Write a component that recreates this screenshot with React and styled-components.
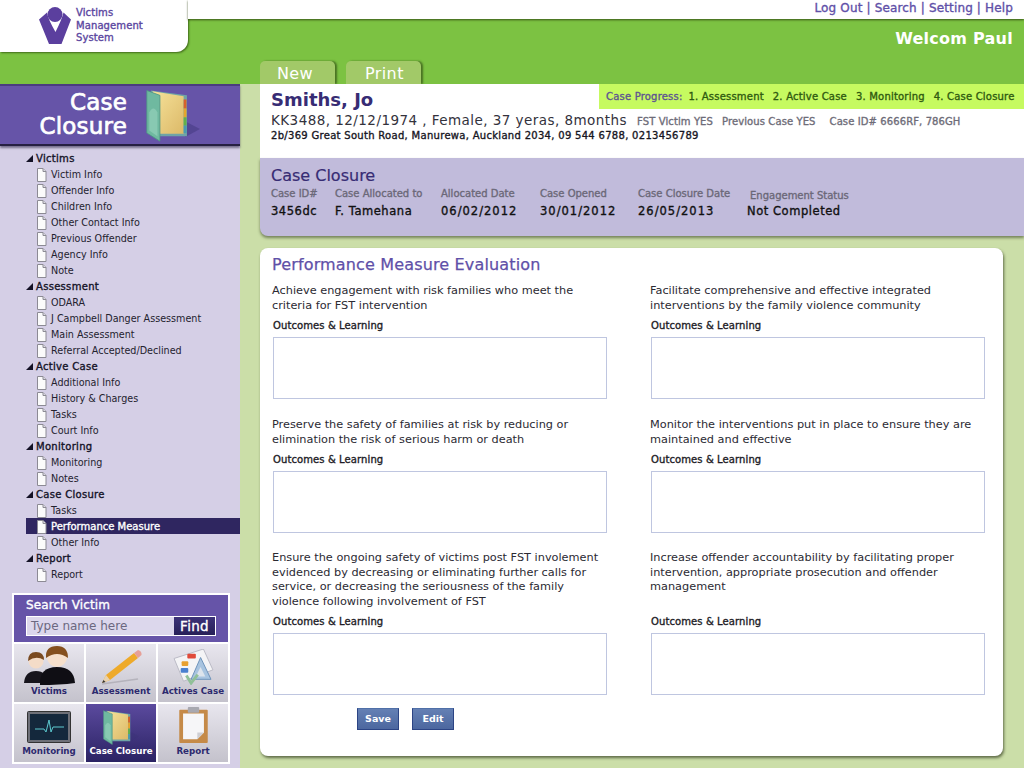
import React from 'react';
import styled, { createGlobalStyle, css } from 'styled-components';

const GlobalStyle = createGlobalStyle`
  html, body { margin: 0; padding: 0; background: #cbdea8; }
  body { font-family: "DejaVu Sans", Verdana, sans-serif; }
  * { box-sizing: border-box; }
`;

// the reference's bold is narrower than DejaVu Bold
const semiBold = css`
  font-weight: normal;
  -webkit-text-stroke: 0.35px currentColor;
`;

const Page = styled.div`
  width: 1024px;
  height: 768px;
  overflow: hidden;
  display: flex;
  flex-direction: column;
  background: #cbdea8;
`;

// HEADER
const Header = styled.header`
  height: 84px;
  flex: none;
  display: flex;
  background: #7cc242;
`;

const LogoCard = styled.div`
  width: 188px;
  height: 52px;
  flex: none;
  display: flex;
  gap: 5px;
  padding: 7px 0 0 39px;
  background: #fff;
  border-bottom-right-radius: 12px;
  box-shadow: 1px 1px 2px rgba(40, 70, 10, 0.7);
  position: relative;
  z-index: 2;
`;

const LogoText = styled.div`
  ${semiBold}
  font-size: 10px;
  line-height: 12.7px;
  letter-spacing: 0.1px;
  color: #5b46a0;
`;

const HeaderRight = styled.div`
  flex: 1;
  display: flex;
  flex-direction: column;
`;

const TopLinks = styled.div`
  ${semiBold}
  height: 19px;
  flex: none;
  position: relative;
  z-index: 3;
  background: #fff;
  box-shadow: 0 1px 2px rgba(40, 60, 10, 0.8);
  text-align: right;
  padding-right: 11px;
  font-size: 12px;
  line-height: 17px;
  letter-spacing: 0.15px;
  color: #5f50a8;
`;

const Welcome = styled.div`
  text-align: right;
  padding: 10px 11px 0 0;
  font-size: 16px;
  font-weight: bold;
  line-height: 20px;
  letter-spacing: 0.25px;
  color: #fff;
`;

const Tabs = styled.div`
  margin-top: auto;
  margin-left: 72px;
  display: flex;
  gap: 11px;
`;

const Tab = styled.div`
  width: 75px;
  height: 23px;
  padding-left: ${(p) => p.$pad}px;
  background: #a2c968;
  border-radius: 5px 5px 0 0;
  box-shadow: 2px 0 2px rgba(50, 80, 20, 0.7);
  color: #fff;
  font-size: 16px;
  line-height: 26px;
  letter-spacing: 0.4px;
`;

const Body = styled.div`
  flex: 1;
  display: flex;
  min-height: 0;
`;

// SIDEBAR
const Sidebar = styled.aside`
  width: 240px;
  flex: none;
  display: flex;
  flex-direction: column;
  background: #d5cfe6;
`;

const Banner = styled.div`
  height: 62px;
  flex: none;
  display: flex;
  justify-content: flex-end;
  padding: 2px 40px 0 0;
  gap: 19px;
  align-items: flex-start;
  background: #6654a8;
  border-top: 2px solid #4a3c80;
  border-bottom: 2px solid #262042;
  box-shadow: 0 2px 2px rgba(40, 35, 70, 0.55);
`;

const BannerTitle = styled.div`
  padding-top: 2px;
  font-size: 23px;
  font-weight: normal;
  -webkit-text-stroke: 0.7px #fff;
  letter-spacing: 0.2px;
  line-height: 24px;
  color: #fff;
  text-align: right;
`;

const Tree = styled.nav`
  padding: 4px 0 0 26px;
  flex: none;
`;

const TreeHead = styled.div`
  ${semiBold}
  height: 16px;
  padding-top: 1px;
  display: flex;
  align-items: center;
  gap: 3px;
  font-size: 10px;
  line-height: 15px;
  letter-spacing: 0.3px;
  color: #141226;
`;

const Triangle = styled.span`
  width: 0;
  height: 0;
  border-style: solid;
  border-width: 0 0 7px 7px;
  border-color: transparent transparent #141226 transparent;
`;

const TreeItem = styled.div`
  ${(p) => (p.$active ? semiBold : '')}
  height: 16px;
  display: flex;
  align-items: center;
  gap: 4px;
  padding: 1px 0 0 10px;
  font-size: ${(p) => (p.$active ? 10 : 9.6)}px;
  line-height: 15px;
  color: ${(p) => (p.$active ? '#fff' : '#24222e')};
  background: ${(p) => (p.$active ? '#2f2660' : 'transparent')};
`;

const SearchBox = styled.section`
  width: 218px;
  margin: 11px 0 0 12px;
  border: 2px solid #fff;
  background: #fff;
  flex: none;
`;

const SearchHead = styled.div`
  height: 47px;
  padding: 3px 12px 0;
  margin-bottom: 2px;
  background: #6654a8;
`;

const SearchTitle = styled.div`
  ${semiBold}
  font-size: 12px;
  line-height: 15px;
  color: #fff;
  letter-spacing: 0.1px;
`;

const SearchField = styled.div`
  margin-top: 3px;
  height: 20px;
  display: flex;
  border: 1px solid #fff;
  background: #dcd7ec;
`;

const SearchInput = styled.div`
  flex: 1;
  padding-left: 4px;
  font-size: 12px;
  line-height: 18px;
  color: #6b6880;
`;

const FindButton = styled.div`
  ${semiBold}
  width: 41px;
  background: linear-gradient(#3c3278, #272058);
  color: #fff;
  font-size: 13.5px;
  letter-spacing: 0.3px;
  line-height: 18px;
  text-align: center;
`;

const TileGrid = styled.div`
  display: grid;
  grid-template-columns: repeat(3, 70px);
  grid-auto-rows: 58px;
  gap: 2px;
`;

const Tile = styled.div`
  display: flex;
  flex-direction: column;
  align-items: center;
  background: ${(p) => (p.$active
    ? 'linear-gradient(#5b4a9e, #2b2364)'
    : 'linear-gradient(#e8e6ee, #c4c2cc)')};
`;

const TileIcon = styled.div`
  height: 41px;
  display: flex;
  align-items: flex-end;
  justify-content: center;
`;

const TileLabel = styled.div`
  font-size: 8.7px;
  font-weight: bold;
  line-height: 12px;
  white-space: nowrap;
  color: ${(p) => (p.$active ? '#fff' : '#2d2a6e')};
`;

// MAIN
const Main = styled.main`
  flex: 1;
  padding-left: 20px;
  min-width: 0;
`;

const Patient = styled.div`
  height: 74px;
  background: #fff;
`;

const PatientTop = styled.div`
  display: flex;
  justify-content: space-between;
  height: 25px;
`;

const PatientName = styled.div`
  padding: 4px 0 0 11px;
  font-size: 18px;
  font-weight: bold;
  line-height: 24px;
  color: #372c74;
`;

const Progress = styled.div`
  ${semiBold}
  width: 425px;
  height: 25px;
  background: #c6fa60;
  display: flex;
  align-items: center;
  padding-left: 7px;
  gap: 9px;
  font-size: 10px;
  letter-spacing: 0.2px;
  color: #2f5a10;
  white-space: nowrap;
`;

const ProgressLabel = styled.span`
  color: #5d5590;
  margin-right: -3px;
`;

const PatientLine = styled.div`
  display: flex;
  align-items: baseline;
  padding: 1px 0 0 11px;
  height: 20px;
  white-space: nowrap;
  font-size: 13.5px;
  letter-spacing: 0.45px;
  line-height: 20px;
  color: #33323c;
`;

const PatientMeta = styled.span`
  ${semiBold}
  font-size: 10px;
  letter-spacing: 0.1px;
  color: #6e6c78;
  margin-left: ${(p) => p.$gap}px;
`;

const Address = styled.div`
  ${semiBold}
  padding-left: 11px;
  margin-top: 0;
  font-size: 10px;
  line-height: 13px;
  letter-spacing: 0.3px;
  color: #17161f;
  white-space: nowrap;
`;

const CasePanel = styled.div`
  height: 78px;
  padding: 9px 0 0 11px;
  background: #c1bbdb;
  border-bottom-left-radius: 8px;
  box-shadow: 0 2px 3px rgba(60, 70, 40, 0.6);
`;

const CaseTitle = styled.h2`
  ${semiBold}
  margin: 0;
  font-size: 16px;
  line-height: 18px;
  -webkit-text-stroke-width: 0.2px;
  color: #372c74;
`;

const CaseFields = styled.div`
  display: flex;
  margin-top: 2px;
`;

const CaseField = styled.div`
  width: ${(p) => p.$w}px;
`;

const CaseLabel = styled.div`
  ${semiBold}
  font-size: 10px;
  line-height: 13px;
  margin: ${(p) => (p.$low ? '2px 0 -2px 3px' : '0')};
  color: #6b6878;
  white-space: nowrap;
`;

const CaseValue = styled.div`
  ${semiBold}
  margin-top: 4px;
  font-size: 11.5px;
  line-height: 14px;
  letter-spacing: ${(p) => (p.$date ? 1 : 0.55)}px;
  color: #111;
  white-space: nowrap;
`;

const Card = styled.section`
  width: 743px;
  height: 508px;
  margin-top: 12px;
  padding: 7px 12px 0;
  background: #fff;
  border-radius: 8px;
  box-shadow: 1px 2px 3px rgba(60, 70, 40, 0.75);
`;

const CardTitle = styled.h1`
  margin: 0;
  font-size: 16px;
  font-weight: normal;
  line-height: 20px;
  letter-spacing: 0.15px;
  -webkit-text-stroke: 0.25px #5f50a8;
  color: #5f50a8;
`;

const Measures = styled.div`
  display: grid;
  grid-template-columns: 378px 336px;
  margin-top: 9px;
`;

const Measure = styled.div`
  height: ${(p) => p.$h}px;
  display: flex;
  flex-direction: column;
`;

const MeasureText = styled.p`
  margin: 0;
  max-width: 330px;
  font-size: 11.3px;
  line-height: 14.7px;
  color: #2b2a33;
  min-height: ${(p) => p.$h}px;
`;

const MeasureLabel = styled.div`
  ${semiBold}
  margin: 5px 0 5px 1px;
  font-size: 10px;
  line-height: 13px;
  letter-spacing: 0.1px;
  color: #1d1c26;
`;

const OutcomeBox = styled.div`
  width: 334px;
  height: 62px;
  margin-left: 1px;
  border: 1px solid #bfc6e0;
`;

const Actions = styled.div`
  display: flex;
  gap: 13px;
  padding: 11px 0 0 85px;
`;

const ActionButton = styled.div`
  width: 42px;
  height: 22px;
  background: linear-gradient(#6480b4, #4c679f);
  border: 1px solid #2c4484;
  border-top-color: #5070a8;
  color: #fff;
  font-size: 9.5px;
  font-weight: bold;
  line-height: 20px;
  text-align: center;
`;

// DRAWINGS
const LogoMark = () => (
  <svg width="32" height="38" viewBox="0 0 32 38">
    <circle cx="16" cy="7.5" r="7.5" fill="#5b3f9e" />
    <path d="M0 12.5 L8 5.5 Q9 12 16.5 25 Q23 12 24.5 5.5 L32 12.5 L22.5 37 H10 Z" fill="#5b3f9e" />
  </svg>
);

const DocIcon = () => (
  <svg width="11" height="14" viewBox="0 0 11 14">
    <path d="M1.5 .5 H7 L10 3.5 V13.5 H1.5 Z" fill="#fbfbfb" stroke="#8c8a94" />
    <path d="M7 .5 V3.5 H10" fill="#dcdce2" stroke="#8c8a94" />
  </svg>
);

const FolderIcon = ({ size = 54 }) => (
  <svg width={size} height={size} viewBox="0 0 66 66">
    <defs>
      <linearGradient id="folderPage" x1="0" y1="0" x2="1" y2="1">
        <stop offset="0" stopColor="#f6e29a" />
        <stop offset="1" stopColor="#dcb968" />
      </linearGradient>
    </defs>
    <path d="M48 60 L66 50 L50 42 Z" fill="#3c3278" opacity="0.45" />
    <path d="M6 3 L50 9 V59 H14 Z" fill="#6fa4a6" />
    <path d="M8 4 L46 10 V56 H14 Z" fill="url(#folderPage)" />
    <rect x="46" y="14" width="3.5" height="11" fill="#d8622a" />
    <rect x="46" y="25" width="3.5" height="11" fill="#e6a52c" />
    <rect x="46" y="36" width="3.5" height="10" fill="#62b04a" />
    <rect x="46" y="46" width="3.5" height="9" fill="#4a9ab0" />
    <path d="M1 3 L17 9 V65 L1 55 Z" fill="#6fb9a0" stroke="#4d9484" />
    <path d="M4 30 Q9 20 14 30 V59 L4 52 Z" fill="#88c9b2" />
  </svg>
);

const PeopleIcon = () => (
  <svg width="51" height="39" viewBox="0 0 51 39">
    <path d="M0 37 Q1 25 12 25 Q23 25 24 37 Z" fill="#17151c" />
    <circle cx="12" cy="15" r="7.5" fill="#f4dcc8" />
    <path d="M4 15 Q4 6 12 6 Q20 6 20 14 Q12 9 4 15 Z" fill="#7a4a20" />
    <path d="M16 39 Q15 21 33 21 Q50 21 51 37 Q36 39 16 39 Z" fill="#0f0e14" />
    <circle cx="33" cy="11" r="10" fill="#f6e0cc" />
    <path d="M22 12 Q21 0 33 0 Q44 0 44 12 Q33 4 22 12 Z" fill="#85501f" />
  </svg>
);

const PencilIcon = () => (
  <svg width="41" height="36" viewBox="0 0 41 36">
    <path d="M1 35 L37 30" stroke="#a9a7b0" strokeWidth="1.5" opacity="0.7" />
    <path d="M1 34 L5 26 L33 4 L37 9 L9 31 Z" fill="#eeaa2a" />
    <path d="M1 34 L5 26 L9 31 Z" fill="#e8d2b0" />
    <path d="M1 34 L2.5 31 L4.5 33 Z" fill="#333" />
    <path d="M33 4 L37 1 Q41 2 40.5 6 L37 9 Z" fill="#e6a098" />
  </svg>
);

const DiagramIcon = () => (
  <svg width="42" height="36" viewBox="0 0 44 38">
    <path d="M2 10 L33 0 L43 22 L12 34 Z" fill="#f4f4f6" stroke="#b8b8c4" />
    <rect x="16" y="5" width="9" height="5" rx="1" fill="#e04a3a" />
    <rect x="10" y="13" width="7" height="5" rx="1" fill="#e8a030" />
    <rect x="9" y="20" width="8" height="5" rx="1" fill="#4a80d0" />
    <path d="M30 9 L41 32 H20 Z" fill="#a8c4e0" stroke="#6a90b8" />
    <path d="M30 19 L35 29 H25 Z" fill="#dde4ec" />
    <path d="M15 28 L20 36 L27 27" fill="none" stroke="#90c098" strokeWidth="3" />
  </svg>
);

const MonitorIcon = () => (
  <svg width="44" height="32" viewBox="0 0 44 32" style={{ marginBottom: 2 }}>
    <rect x=".5" y=".5" width="43" height="31" rx="1" fill="#6e7078" stroke="#333" />
    <rect x="3" y="3" width="38" height="26" fill="#14283c" />
    <path d="M8 18 H17 L19 21 L22 9 L24 21 L26 16 H37" fill="none" stroke="#5ccad0" strokeWidth="1" />
  </svg>
);

const ClipboardIcon = () => (
  <svg width="31" height="37" viewBox="0 0 32 39" style={{ marginBottom: 2 }}>
    <rect x="1" y="4" width="30" height="35" rx="1" fill="#c58a48" />
    <path d="M5 8 H27 V28 L20 35 H5 Z" fill="#f6f6f8" />
    <path d="M27 28 L20 35 V28 Z" fill="#cfcfd4" />
    <rect x="10" y="1" width="12" height="6" rx="1" fill="#a8a8b0" />
  </svg>
);

// DATA
const tree = [
  ['Victims', ['Victim Info', 'Offender Info', 'Children Info', 'Other Contact Info', 'Previous Offender', 'Agency Info', 'Note']],
  ['Assessment', ['ODARA', 'J Campbell Danger Assessment', 'Main Assessment', 'Referral Accepted/Declined']],
  ['Active Case', ['Additional Info', 'History & Charges', 'Tasks', 'Court Info']],
  ['Monitoring', ['Monitoring', 'Notes']],
  ['Case Closure', ['Tasks', 'Performance Measure', 'Other Info']],
  ['Report', ['Report']],
];

const tiles = [
  ['Victims', <PeopleIcon />],
  ['Assessment', <PencilIcon />],
  ['Actives Case', <DiagramIcon />],
  ['Monitoring', <MonitorIcon />],
  ['Case Closure', <FolderIcon size={36} />, true],
  ['Report', <ClipboardIcon />],
];

const caseFields = [
  ['Case ID#', '3456dc', 64],
  ['Case Allocated to', 'F. Tamehana', 106],
  ['Allocated Date', '06/02/2012', 99],
  ['Case Opened', '30/01/2012', 98],
  ['Case Closure Date', '26/05/2013', 109],
  ['Engagement Status', 'Not Completed', 150, true],
];

const measures = [
  ['Achieve engagement with risk families who meet the criteria for FST intervention', 30, 134],
  ['Facilitate comprehensive and effective integrated interventions by the family violence community', 30, 134],
  ['Preserve the safety of families at risk by reducing or elimination the risk of serious harm or death', 30, 133],
  ['Monitor the interventions put in place to ensure they are maintained and effective', 30, 133],
  ['Ensure the ongoing safety of victims post FST involement evidenced by decreasing or eliminating further calls for service, or decreasing the seriousness of the family violence following involvement of FST', 59, 146],
  ['Increase offender accountability by facilitating proper intervention, appropriate prosecution and offender management', 59, 146],
];

const App = () => (
  <Page>
    <GlobalStyle />
    <Header>
      <LogoCard>
        <LogoMark />
        <LogoText>Victims<br />Management<br />System</LogoText>
      </LogoCard>
      <HeaderRight>
        <TopLinks>Log Out | Search | Setting | Help</TopLinks>
        <Welcome>Welcom Paul</Welcome>
        <Tabs>
          <Tab $pad={17}>New</Tab>
          <Tab $pad={19}>Print</Tab>
        </Tabs>
      </HeaderRight>
    </Header>
    <Body>
      <Sidebar>
        <Banner>
          <BannerTitle>Case<br />Closure</BannerTitle>
          <FolderIcon />
        </Banner>
        <Tree>
          {tree.map(([head, items]) => (
            <React.Fragment key={head}>
              <TreeHead><Triangle />{head}</TreeHead>
              {items.map((item) => (
                <TreeItem key={item} $active={item === 'Performance Measure'}>
                  <DocIcon />{item}
                </TreeItem>
              ))}
            </React.Fragment>
          ))}
        </Tree>
        <SearchBox>
          <SearchHead>
            <SearchTitle>Search Victim</SearchTitle>
            <SearchField>
              <SearchInput>Type name here</SearchInput>
              <FindButton>Find</FindButton>
            </SearchField>
          </SearchHead>
          <TileGrid>
            {tiles.map(([label, icon, active]) => (
              <Tile key={label} $active={active}>
                <TileIcon>{icon}</TileIcon>
                <TileLabel $active={active}>{label}</TileLabel>
              </Tile>
            ))}
          </TileGrid>
        </SearchBox>
      </Sidebar>
      <Main>
        <Patient>
          <PatientTop>
            <PatientName>Smiths, Jo</PatientName>
            <Progress>
              <ProgressLabel>Case Progress:</ProgressLabel>
              <span>1. Assessment</span>
              <span>2. Active Case</span>
              <span>3. Monitoring</span>
              <span>4. Case Closure</span>
            </Progress>
          </PatientTop>
          <PatientLine>
            KK3488, 12/12/1974 , Female, 37 yeras, 8months
            <PatientMeta $gap={10}>FST Victim YES</PatientMeta>
            <PatientMeta $gap={9}>Previous Case YES</PatientMeta>
            <PatientMeta $gap={14}>Case ID# 6666RF, 786GH</PatientMeta>
          </PatientLine>
          <Address>2b/369 Great South Road, Manurewa, Auckland 2034, 09 544 6788, 0213456789</Address>
        </Patient>
        <CasePanel>
          <CaseTitle>Case Closure</CaseTitle>
          <CaseFields>
            {caseFields.map(([label, value, width, low]) => (
              <CaseField key={label} $w={width}>
                <CaseLabel $low={low}>{label}</CaseLabel>
                <CaseValue $date={value.includes('/')}>{value}</CaseValue>
              </CaseField>
            ))}
          </CaseFields>
        </CasePanel>
        <Card>
          <CardTitle>Performance Measure Evaluation</CardTitle>
          <Measures>
            {measures.map(([text, minH, height]) => (
              <Measure key={text} $h={height}>
                <MeasureText $h={minH}>{text}</MeasureText>
                <MeasureLabel>Outcomes &amp; Learning</MeasureLabel>
                <OutcomeBox />
              </Measure>
            ))}
          </Measures>
          <Actions>
            <ActionButton>Save</ActionButton>
            <ActionButton>Edit</ActionButton>
          </Actions>
        </Card>
      </Main>
    </Body>
  </Page>
);

export default App;
